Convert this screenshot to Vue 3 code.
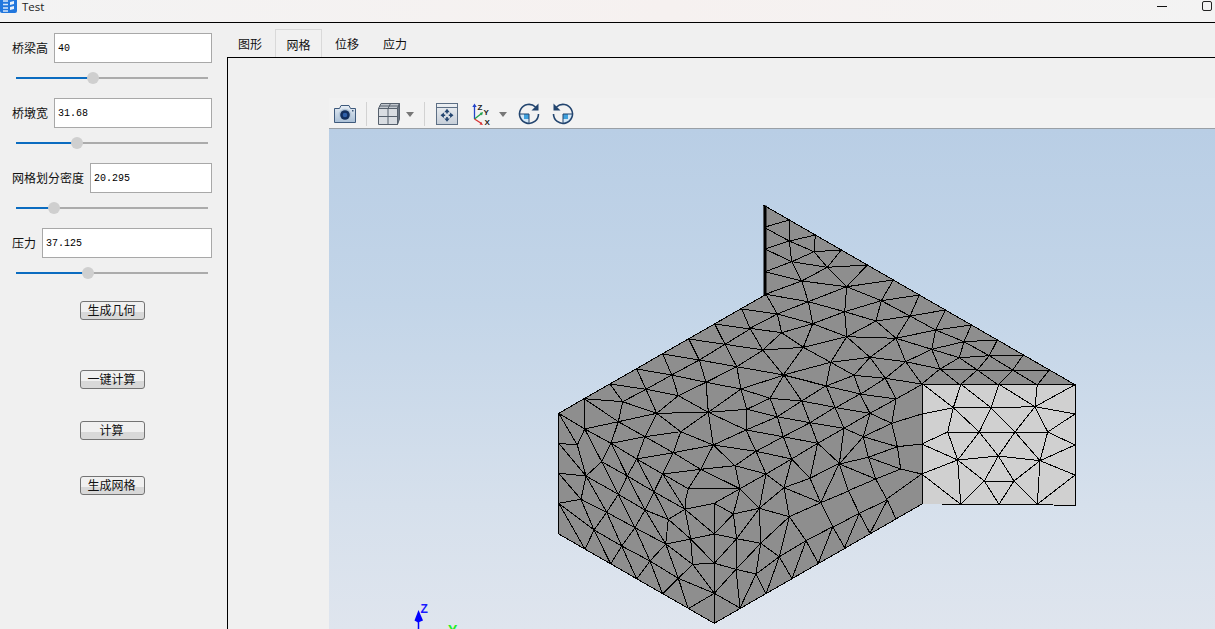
<script setup>
const fields = [
  { label: '桥梁高', value: '40', pos: 40.2 },
  { label: '桥墩宽', value: '31.68', pos: 32 },
  { label: '网格划分密度', value: '20.295', pos: 19.8 },
  { label: '压力', value: '37.125', pos: 37.5 },
]
const buttons = [
  { text: '生成几何', cls: 'b1' },
  { text: '一键计算', cls: 'b2' },
  { text: '计算', cls: 'b3' },
  { text: '生成网格', cls: 'b4' },
]
const tabs = ['图形', '网格', '位移', '应力']

const groups = [
  { o: [740, 195], lines: [
    '72,97 148,75 148,138 72,97', '148,138 226,120 222,170 148,138 75,162 155,200 148,138',
    '155,200 222,170 304,165 262,217 222,170', '155,200 262,217 382,210 320,275 262,217',
    '155,200 76,230 185,258 155,200', '185,258 262,217', '185,258 320,275 460,255 424,317 320,275',
    '424,317 538,300 510,363 424,317', '510,363 616,345 587,405 510,363', '587,405 694,390 672,440 587,405',
    '672,440 772,435 748,482 672,440', '748,482 850,480 818,525 748,482', '818,525 928,525 892,570 818,525',
    '818,525 775,570 712,525 748,482', '712,525 818,525', '712,525 660,570 600,522 712,525',
    '672,440 658,488 748,482', '658,488 712,525', '658,488 600,522 545,567', '587,405 575,463 672,440',
    '575,463 658,488', '575,463 600,522 497,500 575,463 468,430 587,405', '510,363 468,430 497,500 545,567',
    '424,317 408,378 510,363', '408,378 468,430 320,425 408,378', '320,425 390,487 468,430', '390,487 497,500',
    '320,275 314,350 424,317', '314,350 408,378', '314,350 320,425', '185,258 205,320 320,275',
    '205,320 314,350', '205,320 218,386 314,350', '218,386 320,425 190,457 218,386', '190,457 272,502 320,425',
    '272,502 390,487 342,541 272,502', '342,541 436,550 390,487', '436,550 497,500', '436,550 545,567',
    '342,541 258,573 272,502', '258,573 362,597 342,541', '362,597 436,550', '190,457 130,540 272,502',
    '130,540 258,573', '76,298 185,258', '78,298 205,320 112,357 78,298', '112,357 218,386 125,413 112,357',
    '125,413 190,457 68,465 125,413', '68,465 130,540', '125,413 30,400 112,357 5,342 30,400 68,465',
  ] },
  { o: [550, 290], lines: [
    '494,102 525,163 600,117 494,102', '525,163 640,180', '416,147 448,210 525,163 416,147',
    '448,210 560,230 525,163', '560,230 640,180', '560,230 702,255', '338,192 365,255 448,210 338,192',
    '365,255 468,277 448,210', '468,277 560,230 573,297 468,277', '573,297 702,255',
    '260,237 288,298 365,255 260,237', '288,298 385,317 365,255', '385,317 468,277',
    '180,282 218,335 288,298 180,282', '218,335 320,370 385,317', '288,298 320,370',
    '102,326 218,335 205,395 104,417 102,326 205,395', '26,370 104,417 82,465 26,370', '26,460 82,465 108,558 26,460',
    '104,417 155,515 183,460 104,417', '183,460 232,558', '205,395 320,370 285,440 205,395', '205,395 183,460 285,440 392,425 320,370',
    '320,370 475,367 385,317', '468,277 475,367 573,297 660,325 702,255', '573,297 590,358 660,325',
    '475,367 590,358 588,420 475,367', '590,358 682,380 660,325 755,333 702,255 828,287 755,333 682,380',
    '755,333 780,398 682,380 588,420', '682,380 700,440 588,420', '700,440 780,398 855,352 755,333',
    '828,287 855,352 882,415 780,398', '780,398 803,460 700,440', '803,460 882,415',
    '475,367 392,425 490,465 475,367', '490,465 588,420 618,484 490,465', '618,484 700,440 725,507 618,484',
    '725,507 803,460', '392,425 370,488 285,440 260,507 183,460', '370,488 490,465', '370,488 260,507',
  ] },
  { o: [550, 450], lines: [
    '26,70 108,78 93,148 26,70', '26,160 93,148 132,240 26,160 105,298', '108,78 205,133 170,187 108,78 155,35 232,78 205,133',
    '155,35 205,133 255,233', '93,148 170,187 132,240', '232,78 312,125', '232,78 260,27 338,72 312,125 260,27',
    '232,78 285,180 347,282', '205,133 285,180 312,125 405,178 338,72', '312,125 355,208',
    '338,72 370,8', '338,72 452,58 415,116 338,72', '452,58 370,8', '452,58 490,-15 555,47 452,58 570,116 415,116',
    '555,47 570,116', '555,47 618,4 648,72 555,47', '648,72 570,116 628,175 648,72 702,113 628,175', '702,113 718,200 628,175',
    '702,113 780,85 725,27 648,72', '725,27 702,113', '780,85 803,-20', '803,-20 868,40 780,85 812,158 702,113',
    '812,158 718,200', '812,158 848,230', '812,158 868,40', '718,200 768,272 688,320 718,200 632,280 628,175',
    '628,175 550,192 570,116', '550,192 493,252', '550,192 560,266 628,175', '632,280 560,266',
    '415,116 408,145 405,178 493,160 570,116', '493,160 493,520', '493,160 550,192', '405,178 493,252', '405,178 422,267',
    '405,178 355,208 285,180', '355,208 347,282 422,267 355,208', '422,267 493,252', '422,267 428,343 347,282',
    '422,267 493,340', '347,282 300,333', '347,282 385,385', '428,343 493,340', '428,343 385,385', '428,343 493,430',
    '493,340 558,358 618,372 632,280 558,358', '493,252 560,266 493,340', '560,266 558,358 493,430', '632,280 688,320 618,372 648,432 688,320 726,386',
    '618,372 570,474', '558,358 570,474 493,430 415,476', '493,430 385,385 415,476', '385,385 338,432', '385,385 300,333 338,432',
    '300,333 260,387', '300,333 215,288 260,387', '215,288 182,342', '215,288 255,233 300,333', '255,233 347,282', '255,233 285,180',
    '255,233 170,187 215,288 132,240 105,298', '132,240 182,342', '768,272 726,386',
    '768,272 805,340', '768,272 848,230 885,295', '848,230 805,340',
  ] },
  { o: [820, 370], lines: [
    '120,72 228,87 308,42', '196,25 228,87 215,160 305,132', '47,113 120,72', '47,113 150,130 120,72',
    '228,87 150,130 215,160 232,230 305,222', '150,130 130,200 215,160', '150,130 72,175 130,200 232,230 145,262 130,200',
    '232,230 242,297 305,312', '145,262 242,297 167,327 145,262', '58,282 145,262', '58,282 72,175', '58,282 130,200',
    '58,282 167,327 200,387 305,312', '58,282 85,362 167,327', '85,362 118,430',
  ] },
  { o: [790, 480], lines: [
    '92,68 178,32', '208,100 128,142', '292,60 208,100', '292,60 318,117', '292,60 240,160 208,100 162,207',
  ] },
]
const lightLines = [
  '308,42 400,113 423,43 513,113 537,43 645,110 652,43', '765,44 645,110', '305,132 400,113 513,113 645,110 765,132',
  '400,113 383,186 478,186 400,113', '513,113 478,186', '513,113 585,186 645,110', '645,110 683,186 765,132',
  '305,222 383,186 683,186 765,225', '383,186 413,270 478,186 535,258 585,186 660,272 683,186', '765,225 660,272',
  '305,222 413,270 305,312 422,403', '413,270 535,258 660,272', '413,270 493,333 535,258 582,333 660,272 765,315 652,403',
  '493,333 582,333', '413,270 422,403', '493,333 422,403', '493,333 537,403 582,333 652,403 660,272',
]

function toPath(o, lines) {
  return lines.map((l) => {
    const pts = l.split(' ').map((p) => {
      const [x, y] = p.split(',').map(Number)
      return `${(o[0] + x / 3).toFixed(1)} ${(o[1] + y / 3).toFixed(1)}`
    })
    return 'M' + pts.join('L')
  }).join('')
}
const meshPath = groups.map((g) => toPath(g.o, g.lines)).join('')
const lightPath = toPath([820, 370], lightLines)
</script>

<template>
  <div class="window">
    <header class="titlebar">
      <svg class="appicon" viewBox="0 0 17 14" width="17" height="14">
        <rect x="0" y="-2" width="17" height="15" rx="2" fill="#2277dd" />
        <path d="M3 1h5M3 4.500h5M3 8h5M3 11h5" stroke="#d8e8fb" stroke-width="1.400" />
        <path d="M10 2l4-1v3l-4 1zM10 7l4-1v3l-4 1z" fill="#e8f1fc" />
      </svg>
      <span class="apptitle">Test</span>
      <span class="ctl-min"></span>
      <span class="ctl-max"></span>
    </header>
    <div class="body">
      <aside class="sidebar">
        <div v-for="f in fields" :key="f.label" class="field">
          <div class="row">
            <label class="lbl">{{ f.label }}</label>
            <input class="inp" :value="f.value" readonly />
          </div>
          <div class="slider">
            <div class="track">
              <div class="fill" :style="{ width: f.pos + '%' }"></div>
              <div class="knob" :style="{ left: f.pos + '%' }"></div>
            </div>
          </div>
        </div>
        <button v-for="b in buttons" :key="b.text" class="btn" :class="b.cls">{{ b.text }}</button>
      </aside>
      <main class="content">
        <nav class="tabs">
          <div v-for="(t, i) in tabs" :key="t" class="tab" :class="{ active: i === 1 }">{{ t }}</div>
        </nav>
        <section class="pane">
          <div class="viewer">
            <div class="toolbar">
              <svg class="i-cam" width="22" height="18" viewBox="0 0 22 18">
                <defs>
                  <linearGradient id="cam" x1="0" y1="0" x2="0" y2="1">
                    <stop offset="0" stop-color="#e6edf4" /><stop offset="1" stop-color="#a9bfd6" />
                  </linearGradient>
                </defs>
                <path d="M.5 3.500h5l1.500-3h8l1.500 3h5v14H.5z" fill="url(#cam)" stroke="#3f5a7c" />
                <circle cx="11" cy="10" r="6.300" fill="#b4c6d9" />
                <circle cx="11" cy="10" r="4.800" fill="#132f5e" />
                <circle cx="11" cy="10" r="2.300" fill="#2f5fa8" />
                <rect x="18" y="5" width="1.500" height="1.500" fill="#3f5a7c" />
              </svg>
              <span class="sep s1"></span>
              <svg class="i-cube" width="22" height="22" viewBox="0 0 22 22">
                <path d="M.5 5.500h19v16H.5z" fill="#d9dde2" stroke="#56606c" />
                <path d="M.5 5.500L3 .5h18.500l-2 5z" fill="#c2c8cf" stroke="#56606c" />
                <path d="M19.500 5.500l2-5v15.500l-2 5.500z" fill="#6d7785" stroke="#56606c" />
                <path d="M10 5.500v16M.5 13.500h19M10 5.500L12.500.5M1.800 3h18.700" stroke="#56606c" fill="none" />
              </svg>
              <span class="caret c1"></span>
              <span class="sep s2"></span>
              <svg class="i-fit" width="22" height="22" viewBox="0 0 22 22">
                <defs>
                  <linearGradient id="fit" x1="0" y1="0" x2="0" y2="1">
                    <stop offset="0" stop-color="#eef1f4" /><stop offset="1" stop-color="#c6ced8" />
                  </linearGradient>
                </defs>
                <rect x=".5" y=".5" width="21" height="21" fill="url(#fit)" stroke="#5d6f85" />
                <path d="M.5 4.500h21" stroke="#5d6f85" />
                <path d="M11 5.800l2.700 3.400h-1.900v1.300h-1.600V9.200H8.300zM11 18.800l2.700-3.400h-1.900v-1.300h-1.600v1.300H8.300zM4.500 12.300l3.400-2.700v1.900h1.300v1.600H7.900v1.900zM17.500 12.300l-3.400-2.700v1.900h-1.300v1.600h1.300v1.900z" fill="#23456f" />
              </svg>
              <svg class="i-axes" width="22" height="22" viewBox="0 0 22 22">
                <path d="M2.500 16V3" stroke="#2343c8" stroke-width="1.300" />
                <path d="M2.500 .5l2.200 3.500H.3z" fill="#2343c8" />
                <path d="M2.500 16l7-5.500" stroke="#1fa04a" stroke-width="1.300" />
                <path d="M11 9l-1 3.500-2.300-2.500z" fill="#1fa04a" />
                <path d="M2.500 16l7 4.500" stroke="#d93030" stroke-width="1.300" />
                <path d="M11 22l-3.500-.500 1.600-2.600z" fill="#d93030" />
                <text x="5.500" y="7" class="axt">Z</text>
                <text x="11.500" y="11.500" class="axt">Y</text>
                <text x="12.500" y="21.500" class="axt">X</text>
              </svg>
              <span class="caret c2"></span>
              <svg class="i-rot r1" width="22" height="22" viewBox="0 0 22 22">
                <path d="M11 11H1.500A9.500 9.500 0 0 0 11 20.500z" fill="#d4e8f7" />
                <path d="M11 11H6v5h5z" fill="#3fa0dc" />
                <path d="M1.500 11H11v9.500" stroke="#23456f" fill="none" />
                <path d="M17.500 4A9.500 9.500 0 1 0 20.500 11" fill="none" stroke="#23456f" stroke-width="1.600" />
                <path d="M20.500 .5v7h-7z" fill="#23456f" />
              </svg>
              <svg class="i-rot r2" width="22" height="22" viewBox="0 0 22 22">
                <path d="M11 11H20.500A9.500 9.500 0 0 1 11 20.500z" fill="#d4e8f7" />
                <path d="M11 11h5v5h-5z" fill="#3fa0dc" />
                <path d="M20.500 11H11v9.500" stroke="#23456f" fill="none" />
                <path d="M4.500 4A9.500 9.500 0 1 1 1.500 11" fill="none" stroke="#23456f" stroke-width="1.600" />
                <path d="M1.500 .5v7h7z" fill="#23456f" />
              </svg>
            </div>
            <div class="canvas">
              <svg class="scene" viewBox="329 129 886 500" width="886" height="500">
                <path
                  d="M763.300 205L1075 384.700V386H922V504L714.300 623.300L558.700 534V413.300L765 295z"
                  fill="#8e8e8e"
                />
                <path d="M922 384H1075V505.500L1053 505L940 504H922z" fill="#d0d0d0" />
                <path :d="meshPath" class="wire" />
                <path :d="lightPath" class="wire" />
                <path
                  d="M763.300 205L1075 384.700V505.500L1053 505L940 504H922L714.300 623.300L558.700 534V413.300L765 295"
                  class="wire"
                />
                <path d="M922 384H1075M922 384V504" class="wire" />
                <path d="M765 205.500V296" stroke="#000" stroke-width="3" />
                <path d="M418.500 620V629" stroke="#0000ff" stroke-width="1.500" />
                <path d="M418.500 610L423 620.500L418 622.500L414.500 620.500z" fill="#0000ff" />
                <text x="420.500" y="612.500" class="zlabel">Z</text>
                <text x="448" y="635" class="ylabel">Y</text>
              </svg>
            </div>
          </div>
        </section>
      </main>
    </div>
  </div>
</template>

<style>
html, body { margin: 0; background: #f0f0f0; overflow: hidden; }
</style>

<style scoped>
.window {
  width: 1215px;
  height: 629px;
  display: flex;
  flex-direction: column;
  overflow: hidden;
  background: #f0f0f0;
  font-family: "Noto Sans CJK SC", "Noto Sans", sans-serif;
  font-size: 12px;
  color: #111;
}
.titlebar {
  height: 22px;
  flex: none;
  display: flex;
  align-items: flex-start;
  background: linear-gradient(90deg, #f3f3f3, #f6f1f0 55%, #f3f3f3);
  border-bottom: 1px solid #000;
  position: relative;
}
.appicon { flex: none; }
.apptitle {
  margin-left: 5px;
  font-family: "Open Sans", "Noto Sans", sans-serif;
  font-size: 11.5px;
  line-height: 14px;
  color: #222;
}
.ctl-min {
  position: absolute;
  left: 1157px;
  top: 6px;
  width: 10px;
  height: 1px;
  background: #111;
}
.ctl-max {
  position: absolute;
  left: 1202px;
  top: 1px;
  width: 8px;
  height: 8px;
  border: 1px solid #222;
  border-radius: 2px;
}
.body { flex: 1; display: flex; min-height: 0; }
.sidebar {
  width: 227px;
  flex: none;
  box-sizing: border-box;
  padding-top: 10px;
  display: flex;
  flex-direction: column;
  align-items: flex-start;
}
.field { width: 100%; height: 65px; }
.row {
  height: 30px;
  display: flex;
  align-items: center;
  gap: 6px;
  padding: 0 15px 0 12px;
}
.lbl { flex: none; line-height: 30px; }
.inp {
  flex: 1;
  min-width: 0;
  height: 30px;
  box-sizing: border-box;
  border: 1px solid #a8a8a8;
  background: #fff;
  padding: 0 3px;
  font-family: "Liberation Mono", monospace;
  font-size: 10px;
  color: #000;
}
.slider { height: 35px; padding: 14px 19px 0 16px; box-sizing: border-box; }
.track { position: relative; height: 2px; background: #ababab; }
.fill { height: 2px; background: #0b6cc0; }
.knob {
  position: absolute;
  top: -5px;
  width: 12px;
  height: 12px;
  margin-left: -6px;
  border-radius: 50%;
  background: #cfcfcf;
}
.btn {
  width: 65px;
  height: 19px;
  margin-left: 80px;
  padding: 0 2px 2px 0;
  box-sizing: border-box;
  border: 1px solid #737373;
  border-radius: 3px;
  background: linear-gradient(#f0f0f0 0, #f0f0f0 58%, #d8d8d8 58%, #d8d8d8 100%);
  font-family: inherit;
  font-size: 12px;
  line-height: 15px;
  color: #111;
}
.b1 { margin-top: 8px; }
.b2 { margin-top: 50px; }
.b3 { margin-top: 32px; }
.b4 { margin-top: 36px; }
.content { flex: 1; min-width: 0; display: flex; flex-direction: column; }
.tabs {
  height: 34px;
  flex: none;
  display: flex;
  align-items: flex-end;
}
.tab {
  height: 28px;
  box-sizing: border-box;
  text-align: center;
  line-height: 29px;
}
.tab:nth-child(1) { width: 48px; padding-right: 2px; }
.tab:nth-child(2) { width: 47px; }
.tab:nth-child(3) { width: 50px; }
.tab:nth-child(4) { width: 46px; }
.tab.active {
  border: 1px solid #d9d9d9;
  border-bottom: none;
  background: #f1f1f1;
}
.pane {
  flex: 1;
  min-height: 0;
  box-sizing: border-box;
  border-top: 1px solid #000;
  border-left: 1px solid #000;
  padding: 40px 0 0 101px;
}
.viewer { height: 100%; display: flex; flex-direction: column; }
.toolbar {
  height: 31px;
  flex: none;
  box-sizing: border-box;
  display: flex;
  align-items: center;
  padding: 2px 0 0 5px;
  background: #f2f2f2;
  border-bottom: 1px solid #9aa0a6;
}
.toolbar svg { flex: none; display: block; }
.sep { width: 1px; height: 24px; background: #d2d2d2; flex: none; }
.s1 { margin-left: 10px; }
.s2 { margin-left: 10px; }
.i-cube { margin-left: 11px; }
.caret {
  width: 0;
  height: 0;
  flex: none;
  border-left: 4.5px solid transparent;
  border-right: 4.5px solid transparent;
  border-top: 5px solid #777;
}
.c1 { margin-left: 6px; }
.c2 { margin-left: 5px; }
.i-fit { margin-left: 11px; }
.i-axes { margin-left: 14px; }
.r1 { margin-left: 11px; }
.r2 { margin-left: 12px; }
.axt {
  font-family: "Liberation Sans", sans-serif;
  font-size: 8px;
  font-weight: 700;
  fill: #222;
}
.canvas {
  flex: 1;
  position: relative;
  min-height: 0;
  overflow: hidden;
  background: linear-gradient(#b9cee5 0, #c3d5e8 35%, #d6e0ec 75%, #dfe5ee 100%);
}
.scene { position: absolute; left: 0; top: 0; display: block; }
.wire {
  fill: none;
  stroke: #000;
  stroke-width: 1;
  shape-rendering: crispEdges;
}
.zlabel {
  font-family: "Liberation Sans", sans-serif;
  font-size: 12px;
  font-weight: 700;
  fill: #1a1aff;
}
.ylabel {
  font-family: "Liberation Sans", sans-serif;
  font-size: 14px;
  font-weight: 700;
  fill: #22ee22;
}
</style>
